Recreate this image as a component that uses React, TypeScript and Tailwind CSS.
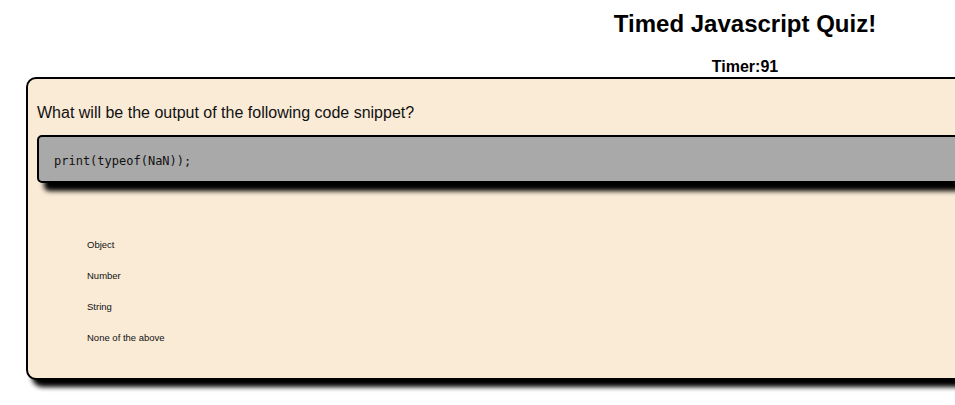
const options = ["Object", "Number", "String", "None of the above"]

export default function App() {
    return (
        <div className="w-full h-[405px] overflow-hidden bg-white">
            <div className="w-[1490px] font-['Liberation_Sans',Arial,sans-serif] text-black">
                <h1 className="pt-[10px] text-center text-[24px] leading-[28px] font-bold">
                    Timed Javascript Quiz!
                </h1>
                <h3 className="mt-[19px] text-center text-[16px] leading-[20px] font-bold">
                    Timer:91
                </h3>
                <div className="ml-[26px] mr-[26px] rounded-[10px] border-2 border-black bg-[#faebd7] pl-[9px] pr-[9px] pt-[24px] pb-[25px] shadow-[6px_7px_5px_#000]">
                    <p className="text-[16px] leading-[20px] text-[#111]">
                        What will be the output of the following code snippet?
                    </p>
                    <div className="mt-[12px] h-[48px] rounded-[5px] border-2 border-black bg-[#a9a9a9] pl-[15px] flex items-center shadow-[7px_8px_5px_#000]">
                        <code className="font-['DejaVu_Sans_Mono',monospace] text-[12px] leading-[16px] text-[#111] pt-[3px]">
                            print(typeof(NaN));
                        </code>
                    </div>
                    <ul className="mt-[46px] pl-[50px]">
                        {options.map((o) => (
                            <li key={o} className="h-[31px] leading-[31px] text-[9.5px] text-[#111]">
                                {o}
                            </li>
                        ))}
                    </ul>
                </div>
            </div>
        </div>
    )
}
